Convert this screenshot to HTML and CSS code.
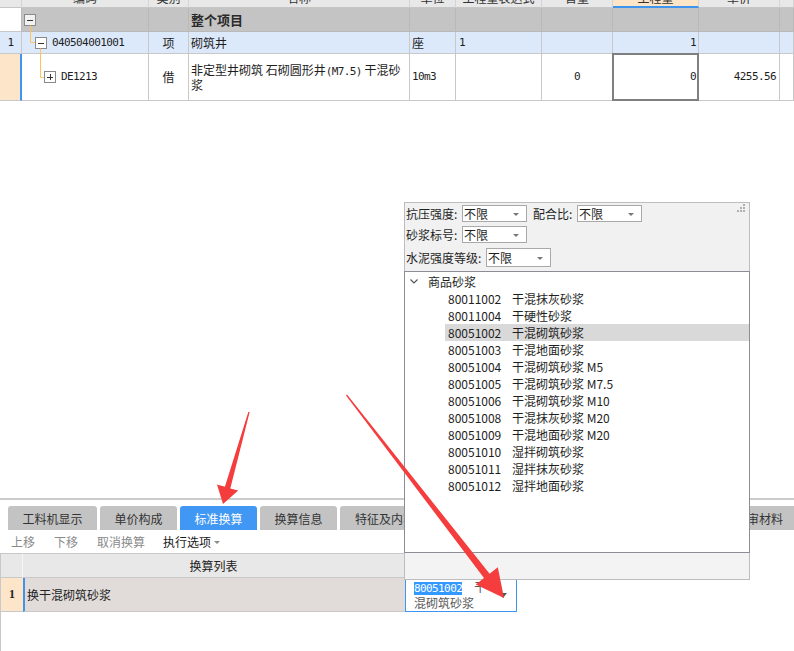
FILE: index.html
```html
<!DOCTYPE html>
<html lang="zh">
<head>
<meta charset="utf-8">
<title>标准换算</title>
<link rel="stylesheet" href="styles.css">
</head>
<body>
<div class="app">
  <div class="top">
    <div class="h"><span></span></div>
    <div class="h"><span>编码</span></div>
    <div class="h"><span>类别</span></div>
    <div class="h"><span>名称</span></div>
    <div class="h"><span>单位</span></div>
    <div class="h"><span>工程量表达式</span></div>
    <div class="h"><span>含量</span></div>
    <div class="h hl"><span>工程量</span></div>
    <div class="h"><span>单价</span></div>
    <div class="h"><span></span></div>

    <div class="c r0 num"></div>
    <div class="c r0 code lv0"><svg class="bx" viewBox="0 0 12 12"><rect x="0.5" y="0.5" width="11" height="11" fill="#f2f2f2" stroke="#8a8a8a"/><path d="M3 6.5h6" stroke="#333" stroke-width="1"/></svg></div>
    <div class="c r0"></div>
    <div class="c r0 name bold">整个项目</div>
    <div class="c r0"></div>
    <div class="c r0"></div>
    <div class="c r0"></div>
    <div class="c r0"></div>
    <div class="c r0"></div>
    <div class="c r0"></div>

    <div class="c r1 num"><span class="m">1</span></div>
    <div class="c r1 code lv1"><svg class="bx" viewBox="0 0 12 12"><rect x="0.5" y="0.5" width="11" height="11" fill="#fff" stroke="#8a8a8a"/><path d="M3 6.5h6" stroke="#333" stroke-width="1"/></svg><span class="m">040504001001</span></div>
    <div class="c r1 ctr">项</div>
    <div class="c r1 name">砌筑井</div>
    <div class="c r1">座</div>
    <div class="c r1 pl"><span class="m">1</span></div>
    <div class="c r1"></div>
    <div class="c r1 rt"><span class="m">1</span></div>
    <div class="c r1"></div>
    <div class="c r1"></div>

    <div class="c r2 num"></div>
    <div class="c r2 code lv2"><svg class="bx" viewBox="0 0 12 12"><rect x="0.5" y="0.5" width="11" height="11" fill="#fff" stroke="#8a8a8a"/><path d="M3 6.5h6M6.5 3v6" stroke="#333" stroke-width="1"/></svg><span class="m">DE1213</span></div>
    <div class="c r2 ctr">借</div>
    <div class="c r2 name two"><span class="txt">非定型井砌筑 石砌圆形井<span class="m">(M7.5)</span> 干混砂<br>浆</span></div>
    <div class="c r2"><span class="m">10m3</span></div>
    <div class="c r2"></div>
    <div class="c r2 ctr"><span class="m">0</span></div>
    <div class="c r2 rt selcell"><span class="m">0</span></div>
    <div class="c r2 rt pr"><span class="m">4255.56</span></div>
    <div class="c r2"></div>
  </div>

  <svg class="tree" width="60" height="101" viewBox="0 0 60 101">
    <path d="M30.5 25.5V42.5H35M40.5 48.5V77.5H44" fill="none" stroke="#ffc35e" stroke-width="1"/>
  </svg>

  <div class="spacer"></div>

  <div class="tabs">
    <div class="tab w1">工料机显示</div>
    <div class="tab">单价构成</div>
    <div class="tab on">标准换算</div>
    <div class="tab">换算信息</div>
    <div class="tab w5">特征及内容</div>
    <div class="tab">工程量明细</div>
    <div class="tab">反查图形</div>
    <div class="tab">说明信息</div>
    <div class="tab last">送审材料</div>
  </div>

  <div class="toolbar">
    <span class="tb">上移</span>
    <span class="tb">下移</span>
    <span class="tb">取消换算</span>
    <span class="tb dark">执行选项<i class="caret"></i></span>
  </div>

  <div class="sub">
    <div class="sh snum"></div>
    <div class="sh title">换算列表</div>
    <div class="sh"></div>
    <div class="sc snum">1</div>
    <div class="sc item">换干混砌筑砂浆</div>
    <div class="sc editor"><span class="m"><span class="hlx">80051002</span>  </span>干<br>混砌筑砂浆<i class="dd"></i></div>
  </div>

  <div class="panel">
    <svg class="grip" width="8" height="8" viewBox="0 0 8 8"><g fill="#b0b0b0"><rect x="6" y="0" width="2" height="2"/><rect x="3" y="3" width="2" height="2"/><rect x="6" y="3" width="2" height="2"/><rect x="0" y="6" width="2" height="2"/><rect x="3" y="6" width="2" height="2"/><rect x="6" y="6" width="2" height="2"/></g></svg>
    <div class="filters">
      <div class="frow r1h">
        <span class="lab">抗压强度<i>:</i></span><span class="sel">不限<b></b></span>
        <span class="lab ml">配合比<i>:</i></span><span class="sel">不限<b></b></span>
      </div>
      <div class="frow r2h">
        <span class="lab">砂浆标号<i>:</i></span><span class="sel">不限<b></b></span>
      </div>
      <div class="frow r3h">
        <span class="lab">水泥强度等级<i>:</i></span><span class="sel tall">不限<b></b></span>
      </div>
    </div>
    <div class="list">
      <div class="grp"><svg class="chev" width="8" height="5" viewBox="0 0 8 5"><path d="M0.5 0.5L4 4L7.5 0.5" fill="none" stroke="#555" stroke-width="1.2"/></svg>商品砂浆</div>
      <div class="it"><span class="cd">80011002</span>干混抹灰砂浆</div>
      <div class="it"><span class="cd">80011004</span>干硬性砂浆</div>
      <div class="it on"><span class="cd">80051002</span>干混砌筑砂浆</div>
      <div class="it"><span class="cd">80051003</span>干混地面砂浆</div>
      <div class="it"><span class="cd">80051004</span>干混砌筑砂浆 M5</div>
      <div class="it"><span class="cd">80051005</span>干混砌筑砂浆 M7.5</div>
      <div class="it"><span class="cd">80051006</span>干混砌筑砂浆 M10</div>
      <div class="it"><span class="cd">80051008</span>干混抹灰砂浆 M20</div>
      <div class="it"><span class="cd">80051009</span>干混地面砂浆 M20</div>
      <div class="it"><span class="cd">80051010</span>湿拌砌筑砂浆</div>
      <div class="it"><span class="cd">80051011</span>湿拌抹灰砂浆</div>
      <div class="it"><span class="cd">80051012</span>湿拌地面砂浆</div>
    </div>
    <div class="pfoot"></div>
  </div>

  <svg class="arrows" width="794" height="651" viewBox="0 0 794 651">
    <polygon fill="#f43d3c" points="249.6,412.2 230.3,488.4 238.2,490.6 223,504 217.0,484.6 224.9,486.8 248.4,411.8"/>
    <polygon fill="#f43d3c" points="347.0,394.6 489.6,573.8 497.8,567.3 504,598 475.8,584.5 484.0,578.0 346.0,395.4"/>
  </svg>
</div>
</body>
</html>
```

FILE: styles.css
```css
* { box-sizing: border-box; margin: 0; padding: 0; }
html, body { width: 794px; height: 651px; overflow: hidden; background: #fff; }
body { font-family: "Noto Sans CJK SC", "Noto Sans", sans-serif; font-size: 12px; color: #222; }

.app { position: relative; width: 794px; height: 651px; display: flex; flex-direction: column; }

/* top grid */
.top {
  flex: none;
  display: grid;
  grid-template-columns: 22px 127px 40px 221px 46px 86px 71px 86px 81px 14px;
  grid-template-rows: 8px 24px 22px 47px;
}
.h { background: #e8e8e8; border-right: 1px solid #d4d4d4; border-bottom: 1px solid #c6c6c6; overflow: hidden; }
.h span { display: block; margin-top: -8px; line-height: 12px; height: 12px; text-align: center; color: #333; }
.h.hl { background: #fde5c8; border-bottom: 2px solid #3d95f0; }

.c {
  border-right: 1px solid #c8c8c8;
  border-bottom: 1px solid #c8c8c8;
  display: flex;
  align-items: center;
  padding: 0 2px;
  white-space: nowrap;
  overflow: hidden;
  line-height: 14px;
  color: #1e1e1e;
}
.r0 { background: #c4c4c4; border-color: #b9b9b9; }
.r0.num { background: #fff; border-bottom-color: #c8c8c8; }
.r1 { background: #dce9fb; }
.r2 { background: #fff; }
.num { justify-content: center; }
.r2.num { background: #fde5c9; border-right: 2px solid #3d95f0; }
.ctr { justify-content: center; }
.rt { justify-content: flex-end; }
.pl { padding-left: 3px; }
.pr { padding-right: 3px; }
.bold { font-weight: bold; font-size: 13px; color: #2a2a2a; }
.two .txt { display: block; line-height: 13.5px; }
.m { font-family: "DejaVu Sans Mono", "Liberation Mono", monospace; font-size: 11px; letter-spacing: -0.6px; }

.code.lv0 { padding-left: 2px; }
.code.lv1 { padding-left: 13px; }
.code.lv2 { padding-left: 22px; }
.bx { width: 12px; height: 12px; flex: none; margin-right: 5px; }

.selcell { position: relative; overflow: visible; }
.selcell::after { content: ""; position: absolute; left: -1px; top: -1px; right: -1px; bottom: -1px; border: 2px solid #7f7f7f; }

.tree { position: absolute; left: 0; top: 0; }

.spacer { flex: none; height: 397px; }

/* tabs */
.tabs { flex: none; height: 32px; display: flex; gap: 3px; padding: 6px 0 0 8px; border-top: 2px solid #cbcbcb; }
.tab {
  flex: none;
  width: 77px;
  height: 24px;
  background: #c3c3c3;
  border-radius: 3px 3px 0 0;
  display: flex;
  align-items: center;
  justify-content: center;
  color: #333;
  font-size: 12px;
}
.tab.w1 { width: 89px; }
.tab.w5 { width: 90px; }
.tab.on { background: #4097f4; color: #fff; }
.tab.last { margin-left: auto; width: auto; padding: 0 11px 0 20px; border-radius: 3px 0 0 0; }

/* toolbar */
.toolbar { flex: none; height: 23px; display: flex; align-items: center; gap: 19px; padding-left: 11px; }
.tb { color: #8a8a8a; font-size: 12px; }
.tb.dark { color: #1a1a1a; margin-left: -1px; display: flex; align-items: center; }
.caret { display: inline-block; margin-left: 3px; margin-top: 2px; border-top: 3px solid #8a8a8a; border-left: 3px solid transparent; border-right: 3px solid transparent; }

/* sub grid */
.sub {
  flex: 1;
  border-left: 1px solid #c8c8c8;
  display: grid;
  grid-template-columns: 22px 382px 112px;
  grid-template-rows: 25px 34px;
  align-content: start;
}
.sh { background: #e8e8e8; border-top: 1px solid #c8c8c8; border-bottom: 1px solid #c8c8c8; display: flex; align-items: center; justify-content: center; color: #222; }
.sh.snum { border-right: 1px solid #f6f6f6; }
.sh.title { border-right: 1px solid #c8c8c8; }
.sc { border-bottom: 1px solid #c8c8c8; display: flex; align-items: center; }
.sc.snum { background: #fde5c9; justify-content: center; font-family: "Liberation Serif", serif; font-weight: bold; font-size: 12px; color: #222; }
.sc.item { background: #e1dcd9; border-left: 2px solid #3d95f0; padding-left: 2px; color: #222; }
.sc.editor {
  display: block;
  position: relative;
  border: 1px solid #3d95f0;
  background: #fff;
  padding: 1px 0 0 8px;
  line-height: 14px;
  color: #5a5a5a;
  white-space: pre;
}
.hlx { background: #3399ff; color: #fff; }
.dd { position: absolute; right: 9px; top: 14px; border-top: 5px solid #555; border-left: 4px solid transparent; border-right: 4px solid transparent; }

/* dropdown panel */
.panel {
  position: absolute;
  left: 404px;
  top: 202px;
  width: 346px;
  height: 378px;
  border: 1px solid #bdbdbd;
  background: #f1f1f1;
  display: flex;
  flex-direction: column;
}
.grip { position: absolute; right: 4px; top: 1px; }
.filters { flex: none; height: 68px; padding: 2px 0 0 1px; }
.frow { display: flex; align-items: center; }
.r1h { height: 17px; }
.r2h { height: 17px; margin-top: 4px; }
.r3h { height: 19px; margin-top: 5px; }
.lab { color: #1e1e1e; white-space: nowrap; }
.lab i { display: inline-block; width: 8px; font-style: normal; }
.lab.ml { margin-left: 6px; }
.sel {
  position: relative;
  width: 65px;
  height: 17px;
  border: 1px solid #a9a9a9;
  background: #fff;
  line-height: 15px;
  padding-left: 1px;
  color: #1e1e1e;
}
.sel.tall { height: 19px; line-height: 17px; }
.sel b { position: absolute; right: 7px; top: 50%; margin-top: -1px; border-top: 3px solid #777; border-left: 3px solid transparent; border-right: 3px solid transparent; }

.list {
  flex: none;
  height: 282px;
  margin: 0 -1px;
  border: 1px solid #8d8d96;
  background: #fff;
  padding-top: 1px;
}
.grp { height: 17px; display: flex; align-items: center; padding-left: 5px; color: #1e1e1e; }
.chev { margin-right: 10px; flex: none; }
.it { height: 17px; line-height: 17px; margin-left: 40px; padding-left: 3px; color: #1e1e1e; white-space: nowrap; }
.it.on { background: #d9d9d9; }
.cd { display: inline-block; width: 64px; }
.pfoot { flex: 1; background: #f3f3f3; }

.arrows { position: absolute; left: 0; top: 0; pointer-events: none; }
```
